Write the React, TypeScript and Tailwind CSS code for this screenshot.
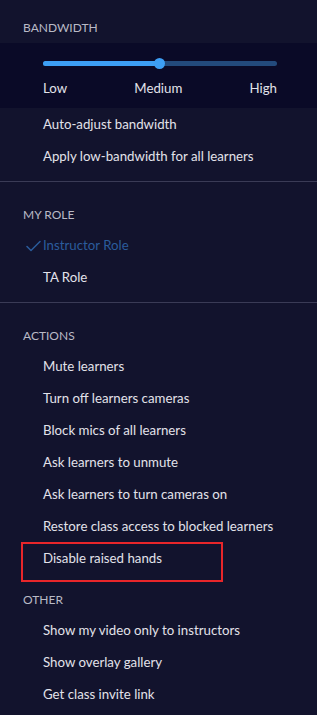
import React from "react";

const font = { fontFamily: "Lato, 'Liberation Sans', sans-serif" };

function Heading({ children }: { children: React.ReactNode }) {
  return (
    <div className="h-8 flex items-center pl-[23px] text-[12px] text-[#b9bac6] pt-[2px]">
      {children}
    </div>
  );
}

function Item({ children }: { children: React.ReactNode }) {
  return (
    <div className="h-8 flex items-center pl-[43px] text-[13.25px] text-[#e2e2ea]">
      {children}
    </div>
  );
}

export default function App() {
  return (
    <div className="w-[317px] h-[715px] bg-[#12132d] overflow-hidden" style={font}>
      <div className="pt-[11px] pb-2">
        <Heading>BANDWIDTH</Heading>
        <div className="bg-[#0a0a27] h-[65px] pl-[43px] pr-[40px] pt-[18px]">
          <div className="relative h-[5px] rounded-full bg-[#234a7c]">
            <div className="absolute left-0 top-0 h-[5px] w-[116px] rounded-full bg-[#3d9ff5]" />
            <div className="absolute left-[111px] top-[-3px] w-[11px] h-[11px] rounded-full bg-[#3d9ff5]" />
          </div>
          <div className="flex justify-between mt-[13px] text-[13.25px] text-[#e2e2ea]">
            <span>Low</span>
            <span>Medium</span>
            <span>High</span>
          </div>
        </div>
        <div className="pt-[1px]">
          <Item>Auto-adjust bandwidth</Item>
          <Item>Apply low-bandwidth for all learners</Item>
        </div>
      </div>
      <div className="h-px bg-[#3a3b56]" />
      <div className="pt-4 pb-2">
        <Heading>MY ROLE</Heading>
        <div className="h-8 flex items-center text-[13.25px] text-[#2b5c9c]">
          <svg className="ml-[26px] mr-[2px]" width="15" height="12" viewBox="0 0 15 12" fill="none">
            <path d="M1 6.5 L5 10.5 L14 1.5" stroke="#2b5c9c" strokeWidth="1.5" strokeLinecap="round" strokeLinejoin="round" />
          </svg>
          <span>Instructor Role</span>
        </div>
        <Item>TA Role</Item>
      </div>
      <div className="h-px bg-[#3a3b56]" />
      <div className="pt-4">
        <Heading>ACTIONS</Heading>
        <Item>Mute learners</Item>
        <Item>Turn off learners cameras</Item>
        <Item>Block mics of all learners</Item>
        <Item>Ask learners to unmute</Item>
        <Item>Ask learners to turn cameras on</Item>
        <Item>Restore class access to blocked learners</Item>
        <div className="relative">
          <Item>Disable raised hands</Item>
          <div className="absolute left-[21px] top-[-1px] w-[202px] h-[40px] border-2 border-[#e8262a] pointer-events-none" />
        </div>
      </div>
      <div className="pt-2">
        <Heading>OTHER</Heading>
        <Item>Show my video only to instructors</Item>
        <Item>Show overlay gallery</Item>
        <Item>Get class invite link</Item>
      </div>
    </div>
  );
}
